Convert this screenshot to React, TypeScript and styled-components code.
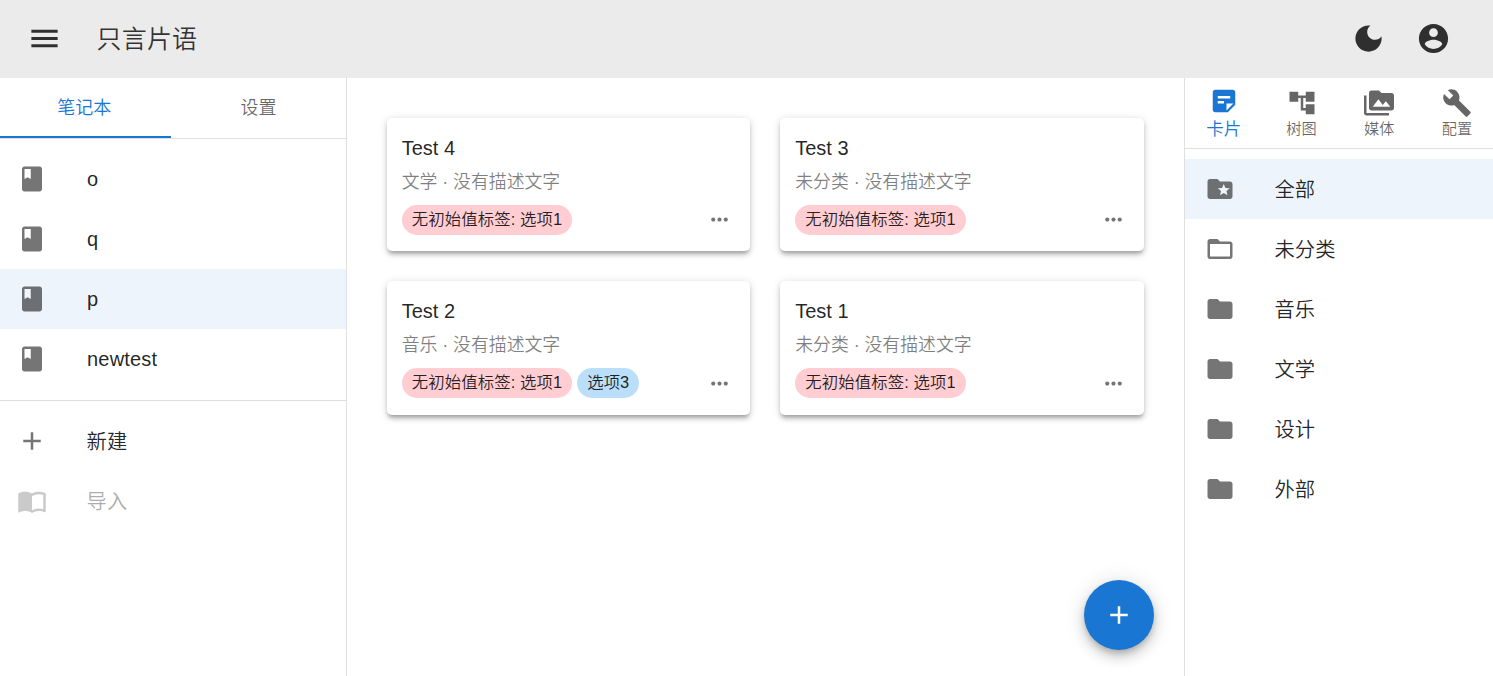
import React from 'react';
import styled, { createGlobalStyle, css } from 'styled-components';

const icons = {
  menu: 'M3 18h18v-2H3v2zm0-5h18v-2H3v2zm0-7v2h18V6H3z',
  dark: 'M12 3c-4.97 0-9 4.03-9 9s4.03 9 9 9 9-4.03 9-9c0-.46-.04-.92-.1-1.36-.98 1.37-2.58 2.26-4.4 2.26-2.98 0-5.4-2.42-5.4-5.4 0-1.81.89-3.42 2.26-4.4-.44-.06-.9-.1-1.36-.1z',
  account:
    'M12 2C6.48 2 2 6.48 2 12s4.48 10 10 10 10-4.48 10-10S17.52 2 12 2zm0 3c1.66 0 3 1.34 3 3s-1.34 3-3 3-3-1.34-3-3 1.34-3 3-3zm0 14.2c-2.5 0-4.71-1.28-6-3.22.03-1.99 4-3.08 6-3.08 1.99 0 5.97 1.09 6 3.08-1.29 1.94-3.5 3.22-6 3.22z',
  book: 'M18 2H6c-1.1 0-2 .9-2 2v16c0 1.1.9 2 2 2h12c1.1 0 2-.9 2-2V4c0-1.1-.9-2-2-2zM6 4h5v8l-2.5-1.5L6 12V4z',
  add: 'M19 13h-6v6h-2v-6H5v-2h6V5h2v6h6v2z',
  import:
    'M21 5c-1.11-.35-2.33-.5-3.5-.5-1.95 0-4.05.4-5.5 1.5-1.45-1.1-3.55-1.5-5.5-1.5S2.45 4.9 1 6v14.65c0 .25.25.5.5.5.1 0 .15-.05.25-.05C3.1 20.45 5.05 20 6.5 20c1.95 0 4.05.4 5.5 1.5 1.35-.85 3.8-1.5 5.5-1.5 1.65 0 3.35.3 4.75 1.05.1.05.15.05.25.05.25 0 .5-.25.5-.5V6c-.6-.45-1.25-.75-2-1zm0 13.5c-1.1-.35-2.3-.5-3.5-.5-1.7 0-4.15.65-5.5 1.5V8c1.35-.85 3.8-1.5 5.5-1.5 1.2 0 2.4.15 3.5.5v11.5z',
  more: 'M6 10c-1.1 0-2 .9-2 2s.9 2 2 2 2-.9 2-2-.9-2-2-2zm12 0c-1.1 0-2 .9-2 2s.9 2 2 2 2-.9 2-2-.9-2-2-2zm-6 0c-1.1 0-2 .9-2 2s.9 2 2 2 2-.9 2-2-.9-2-2-2z',
  note: 'M19 3H4.99C3.89 3 3 3.9 3 5l.01 14c0 1.1.89 2 1.99 2h10l6-6V5c0-1.1-.9-2-2-2zM7 8h10v2H7V8zm5 6H7v-2h5v2zm2 5.5V14h5.5L14 19.5z',
  tree: 'M22 11V3h-7v3H9V3H2v8h7V8h2v10h4v3h7v-8h-7v3h-2V8h2v3h7z',
  media:
    'M2 6H0v5h.01L0 20c0 1.1.9 2 2 2h18v-2H2V6zm20-2h-8l-2-2H6c-1.1 0-1.99.9-1.99 2L4 16c0 1.1.9 2 2 2h16c1.1 0 2-.9 2-2V6c0-1.1-.9-2-2-2zM7 15l4.5-6 3.5 4.51 2.5-3.01L21 15H7z',
  build:
    'M22.7 19l-9.1-9.1c.9-2.3.4-5-1.5-6.9-2-2-5-2.4-7.4-1.3L9 6 6 9 1.6 4.7C.4 7.1.9 10.1 2.9 12.1c1.9 1.9 4.6 2.4 6.9 1.5l9.1 9.1c.4.4 1 .4 1.4 0l2.3-2.3c.5-.4.5-1.1.1-1.4z',
  folderStar:
    'M20 6h-8l-2-2H4c-1.1 0-1.99.9-1.99 2L2 18c0 1.1.9 2 2 2h16c1.1 0 2-.9 2-2V8c0-1.1-.9-2-2-2zm-2.06 11L15 15.28 12.06 17l.78-3.33-2.59-2.24 3.41-.29L15 8l1.34 3.14 3.41.29-2.59 2.24.78 3.33z',
  folderOpen:
    'M20 6h-8l-2-2H4c-1.1 0-1.99.9-1.99 2L2 18c0 1.1.9 2 2 2h16c1.1 0 2-.9 2-2V8c0-1.1-.9-2-2-2zm0 12H4V8h16v10z',
  folder: 'M10 4H4c-1.1 0-1.99.9-1.99 2L2 18c0 1.1.9 2 2 2h16c1.1 0 2-.9 2-2V8c0-1.1-.9-2-2-2h-8l-2-2z',
};
type IconName = keyof typeof icons;

const GlobalStyle = createGlobalStyle`
  * { box-sizing: border-box; }
  body {
    margin: 0;
    background: #fff;
    color: rgba(0, 0, 0, 0.87);
    font-family: "Liberation Sans", "Noto Sans CJK SC", sans-serif;
    font-weight: 350;
    overflow: hidden;
  }
  button {
    font: inherit;
    color: inherit;
    border: 0;
    padding: 0;
    background: none;
    cursor: pointer;
  }
`;

const Svg = styled.svg<{ $size: number }>`
  display: block;
  flex: none;
  width: ${(p) => p.$size}px;
  height: ${(p) => p.$size}px;
  fill: currentColor;
`;

const Icon = ({ name, size = 30 }: { name: IconName; size?: number }) => (
  <Svg $size={size} viewBox="0 0 24 24" aria-hidden="true">
    <path d={icons[name]} />
  </Svg>
);

const Page = styled.div`
  display: flex;
  flex-direction: column;
  height: 100vh;
`;

const AppBar = styled.header`
  display: flex;
  align-items: center;
  flex: none;
  height: 78px;
  padding: 0 42px 2px 27px;
  background: #ebebeb;
  color: rgba(0, 0, 0, 0.8);
`;

const AppTitle = styled.h1`
  flex: 1;
  margin: 0 0 0 34.5px;
  padding-top: 2px;
  font-size: 25px;
  line-height: 40px;
  font-weight: inherit;
  letter-spacing: 0.19px;
`;

const BarActions = styled.div`
  display: flex;
  gap: 30px;
`;

const Body = styled.div`
  display: flex;
  flex: 1;
  min-height: 0;
`;

const LeftPanel = styled.aside`
  flex: none;
  width: 347px;
  border-right: 1px solid #e0e0e0;
`;

const RightPanel = styled.aside`
  flex: none;
  width: 309px;
  border-left: 1px solid #e0e0e0;
`;

const TabBar = styled.nav<{ $height: number }>`
  display: flex;
  height: ${(p) => p.$height}px;
  border-bottom: 1px solid #e0e0e0;
`;

const Tab = styled.button<{ $active?: boolean; $width: number }>`
  flex: none;
  width: ${(p) => p.$width}px;
  padding: 0 ${(p) => (p.$active ? 2.5 : 0)}px 3px 0;
  font-size: 18px;
  color: ${(p) => (p.$active ? '#1976d2' : 'rgba(0, 0, 0, 0.6)')};
  border-bottom: 2px solid ${(p) => (p.$active ? '#1976d2' : 'transparent')};
`;

const ViewTab = styled.button<{ $active?: boolean }>`
  flex: 0 0 77.7px;
  display: flex;
  flex-direction: column;
  align-items: center;
  padding-top: ${(p) => (p.$active ? 8 : 10)}px;
  color: ${(p) => (p.$active ? '#1976d2' : 'rgba(0, 0, 0, 0.6)')};
`;

const ViewLabel = styled.span<{ $active?: boolean }>`
  font-size: ${(p) => (p.$active ? 17.6 : 15.2)}px;
  line-height: ${(p) => (p.$active ? 27 : 22)}px;
`;

const List = styled.ul`
  list-style: none;
  margin: 0;
  padding: 10px 0;
`;

const Row = styled.li<{ $selected?: boolean; $disabled?: boolean; $inset: number; $gap: number }>`
  display: flex;
  align-items: center;
  gap: ${(p) => p.$gap}px;
  height: 60px;
  padding-left: ${(p) => p.$inset}px;
  font-size: 20px;
  line-height: 30px;
  letter-spacing: 0.19px;
  ${(p) => p.$selected && css`background: rgba(25, 118, 210, 0.08);`}
  ${(p) => p.$disabled && css`opacity: 0.38;`}
`;

const RowIcon = styled.span`
  color: rgba(0, 0, 0, 0.54);
`;

const RowLabel = styled.span<{ $latin?: boolean }>`
  padding-top: ${(p) => (p.$latin ? 0 : 2)}px;
  font-size: ${(p) => (p.$latin ? 20 : 20.3)}px;
`;

const Divider = styled.hr`
  height: 1px;
  margin: 1px 0 0;
  border: 0;
  background: #e0e0e0;
`;

const Main = styled.main`
  position: relative;
  flex: 1;
  min-width: 0;
  padding: 40px 40.2px 40px 39.7px;
`;

const CardGrid = styled.div`
  display: grid;
  grid-template-columns: 1fr 1fr;
  gap: 30px;
`;

const Card = styled.article`
  height: 133.4px;
  padding: 15px;
  border-radius: 5px;
  background: #fff;
  box-shadow:
    0 3.75px 3.75px -2.5px rgba(0, 0, 0, 0.2),
    0 3.75px 5px 0 rgba(0, 0, 0, 0.14),
    0 1.25px 10px 0 rgba(0, 0, 0, 0.12);
`;

const CardTitle = styled.h2`
  margin: 0;
  font-size: 20px;
  line-height: 30px;
  font-weight: inherit;
`;

const CardNote = styled.p`
  margin: 6px 0 0;
  font-size: 17.9px;
  line-height: 27px;
  letter-spacing: -0.05px;
  color: rgba(0, 0, 0, 0.5);
`;

const CardFooter = styled.div`
  display: flex;
  align-items: center;
  gap: 5px;
  height: 30px;
  margin-top: 9px;
`;

const Chip = styled.span<{ $tone: 'pink' | 'blue' }>`
  height: 30px;
  padding: 0 10px;
  border-radius: 15px;
  font-size: 16.4px;
  line-height: 29.4px;
  letter-spacing: 0.1px;
  white-space: nowrap;
  background: ${(p) => (p.$tone === 'pink' ? '#ffcdd2' : '#bbdefb')};
`;

const MoreButton = styled.button`
  margin: 0 3.2px 0.4px auto;
  color: rgba(0, 0, 0, 0.54);
`;

const Fab = styled.button`
  position: absolute;
  right: 30px;
  bottom: 26px;
  display: grid;
  place-items: center;
  width: 70px;
  height: 70px;
  border-radius: 50%;
  background: #1976d2;
  && { color: #fff; }
  box-shadow:
    0 3.75px 6.25px -1.25px rgba(0, 0, 0, 0.2),
    0 7.5px 12.5px 0 rgba(0, 0, 0, 0.14),
    0 1.25px 22.5px 0 rgba(0, 0, 0, 0.12);
`;

const notebooks = ['o', 'q', 'p', 'newtest'];
const views: [IconName, string][] = [
  ['note', '卡片'],
  ['tree', '树图'],
  ['media', '媒体'],
  ['build', '配置'],
];
const categories: [IconName, string][] = [
  ['folderStar', '全部'],
  ['folderOpen', '未分类'],
  ['folder', '音乐'],
  ['folder', '文学'],
  ['folder', '设计'],
  ['folder', '外部'],
];
const cards = [
  { title: 'Test 4', category: '文学', extra: '' },
  { title: 'Test 3', category: '未分类', extra: '' },
  { title: 'Test 2', category: '音乐', extra: '选项3' },
  { title: 'Test 1', category: '未分类', extra: '' },
];

export default function App() {
  return (
    <Page>
      <GlobalStyle />
      <AppBar>
        <Icon name="menu" size={35} />
        <AppTitle>只言片语</AppTitle>
        <BarActions>
          <Icon name="dark" size={35} />
          <Icon name="account" size={35} />
        </BarActions>
      </AppBar>
      <Body>
        <LeftPanel>
          <TabBar $height={61}>
            <Tab $active $width={171}>笔记本</Tab>
            <Tab $width={175}>设置</Tab>
          </TabBar>
          <List>
            {notebooks.map((name) => (
              <Row key={name} $selected={name === 'p'} $inset={17} $gap={40}>
                <RowIcon><Icon name="book" /></RowIcon>
                <RowLabel $latin>{name}</RowLabel>
              </Row>
            ))}
          </List>
          <Divider />
          <List>
            <Row $inset={17} $gap={39.6}>
              <RowIcon><Icon name="add" /></RowIcon>
              <RowLabel>新建</RowLabel>
            </Row>
            <Row $disabled $inset={17} $gap={39.6}>
              <RowIcon><Icon name="import" /></RowIcon>
              <RowLabel>导入</RowLabel>
            </Row>
          </List>
        </LeftPanel>
        <Main>
          <CardGrid>
            {cards.map((card) => (
              <Card key={card.title}>
                <CardTitle>{card.title}</CardTitle>
                <CardNote>{card.category} · 没有描述文字</CardNote>
                <CardFooter>
                  <Chip $tone="pink">无初始值标签: 选项1</Chip>
                  {card.extra && <Chip $tone="blue">{card.extra}</Chip>}
                  <MoreButton aria-label="more"><Icon name="more" size={25} /></MoreButton>
                </CardFooter>
              </Card>
            ))}
          </CardGrid>
          <Fab aria-label="add"><Icon name="add" /></Fab>
        </Main>
        <RightPanel>
          <TabBar $height={71}>
            {views.map(([icon, label], i) => (
              <ViewTab key={label} $active={i === 0}>
                <Icon name={icon} />
                <ViewLabel $active={i === 0}>{label}</ViewLabel>
              </ViewTab>
            ))}
          </TabBar>
          <List>
            {categories.map(([icon, label], i) => (
              <Row key={label} $selected={i === 0} $inset={20} $gap={39.4}>
                <RowIcon><Icon name={icon} /></RowIcon>
                <RowLabel>{label}</RowLabel>
              </Row>
            ))}
          </List>
        </RightPanel>
      </Body>
    </Page>
  );
}
